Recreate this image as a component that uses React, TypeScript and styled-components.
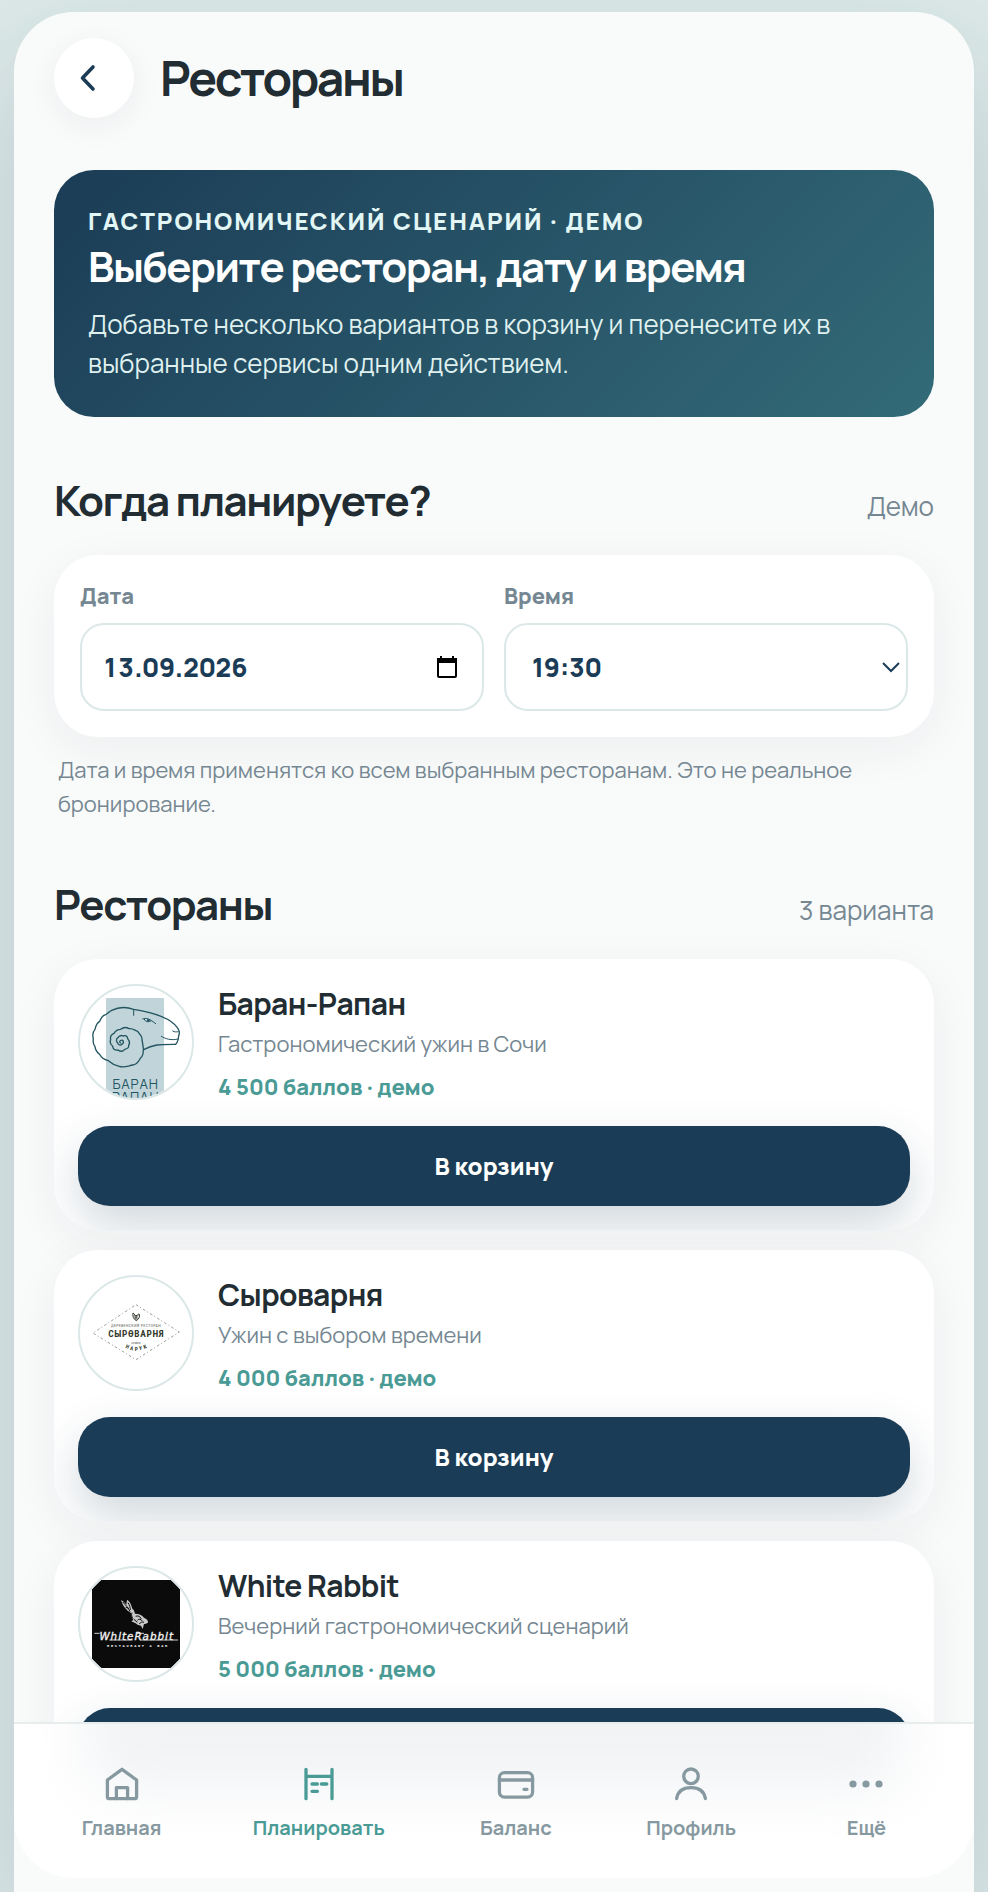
import React from 'react';
import styled, { createGlobalStyle, css } from 'styled-components';

const GlobalStyle = createGlobalStyle`
  *, *::before, *::after { box-sizing: border-box; }
  body {
    margin: 0;
    background: #dde9e8;
    color: #222d33;
    font-family: Manrope, Inter, "Noto Sans", sans-serif;
    -webkit-font-smoothing: antialiased;
  }
  h1, h2, h3, p { margin: 0; }
  button, input, select { font: inherit; }
`;

const Page = styled.div`
  display: flex;
  height: 100vh;
  padding: 12px 14px 0;
  overflow: hidden;
`;

const Frame = styled.div`
  flex: 1;
  min-width: 0;
  overflow-y: auto;
  scrollbar-width: none;
  background: #f9fbfa;
  border-radius: 60px 60px 0 0;
  box-shadow: 0 48px 120px rgba(27, 59, 87, 0.18);
`;

const Content = styled.main`
  display: flex;
  flex-direction: column;
  padding: 26px 40px 0;
`;

const TopBar = styled.header`
  display: flex;
  align-items: center;
  gap: 26px;
  margin-bottom: 52px;
`;

const BackButton = styled.button`
  display: grid;
  place-items: center;
  width: 80px;
  height: 80px;
  padding: 0 12px 0 0;
  border: 0;
  border-radius: 50%;
  background: #fff;
  color: #1b3c56;
  box-shadow: 0 8px 32px rgba(27, 39, 87, 0.06);
`;

const PageTitle = styled.h1`
  font-size: 48px;
  line-height: 56px;
  font-weight: 700;
  letter-spacing: -0.05em;
`;

const Hero = styled.section`
  padding: 34px;
  border-radius: 40px;
  background: linear-gradient(135deg, #1b3c56, #336b78);
  color: #fff;
`;

const Eyebrow = styled.p`
  font-size: 24px;
  line-height: 34px;
  font-weight: 800;
  letter-spacing: 0.08em;
  text-transform: uppercase;
  color: #e2f6f5;
`;

const headingText = css`
  font-size: 42px;
  font-weight: 700;
  letter-spacing: -0.035em;
`;

const HeroTitle = styled.h2`
  ${headingText}
  line-height: 56px;
  margin-bottom: 11px;
`;

const HeroText = styled.p`
  font-size: 26px;
  line-height: 39px;
  font-weight: 400;
  color: #dff0ef;
`;

const SectionHead = styled.div`
  display: flex;
  align-items: baseline;
  justify-content: space-between;
  margin: 56px 0 28px;
`;

const SectionTitle = styled.h2`
  ${headingText}
  line-height: 54px;
`;

const SectionNote = styled.span`
  font-size: 26px;
  line-height: 36px;
  font-weight: 400;
  color: #758792;
`;

const Card = styled.section`
  border-radius: 44px;
  background: #fff;
  box-shadow: 0 12px 48px rgba(27, 39, 87, 0.06);
`;

const PlanCard = styled(Card)`
  display: grid;
  grid-template-columns: 1fr 1fr;
  gap: 20px;
  padding: 26px;
`;

const Field = styled.div`
  display: flex;
  flex-direction: column;
  gap: 12px;
`;

const FieldLabel = styled.label`
  font-size: 22px;
  line-height: 30px;
  font-weight: 800;
  color: #758792;
`;

const controlBox = css`
  width: 100%;
  height: 88px;
  border: 2px solid #dce7e8;
  border-radius: 24px;
  background: #fff;
  color: #1b3c56;
  font-size: 26px;
  font-weight: 800;
`;

const ControlWrap = styled.div<{ $inset: number }>`
  position: relative;

  svg {
    position: absolute;
    top: 50%;
    right: ${(p) => p.$inset}px;
    transform: translateY(-50%);
    pointer-events: none;
  }
`;

const DateInput = styled.input`
  ${controlBox}
  padding: 0 20px;
  font-variant-numeric: tabular-nums;
`;

const TimeSelect = styled.select`
  ${controlBox}
  appearance: none;
  padding: 0 26px;
`;

const Hint = styled.p`
  margin-top: 16px;
  padding: 0 4px;
  font-size: 22px;
  line-height: 34px;
  font-weight: 400;
  color: #758792;
`;

const List = styled.div`
  display: flex;
  flex-direction: column;
  gap: 20px;
  padding-bottom: 80px;
`;

const RestaurantCard = styled(Card).attrs({ as: 'article' })`
  display: flex;
  flex-direction: column;
  gap: 24px;
  padding: 24px;
  overflow: hidden;
`;

const Info = styled.div`
  display: flex;
  align-items: flex-start;
  gap: 24px;
`;

const Avatar = styled.div`
  flex: none;
  width: 116px;
  height: 116px;
  margin-top: 1px;
  border: 2px solid #dce7e8;
  border-radius: 50%;
  overflow: hidden;
  background: #fff;

  svg { display: block; width: 100%; height: 100%; }
`;

const Name = styled.h3`
  font-size: 30px;
  line-height: 42px;
  font-weight: 700;
  letter-spacing: -0.02em;
`;

const Description = styled.p`
  font-size: 22px;
  line-height: 38px;
  font-weight: 400;
  color: #758792;
`;

const Price = styled.p`
  margin-top: 9px;
  font-size: 22px;
  line-height: 30px;
  font-weight: 800;
  color: #4a9b95;
`;

const AddButton = styled.button`
  height: 80px;
  padding: 0 0 2px;
  border: 0;
  border-radius: 32px;
  background: #1b3c56;
  color: #fff;
  font-size: 24px;
  font-weight: 800;
  box-shadow: 0 20px 48px rgba(27, 60, 86, 0.2);
`;

const TabBar = styled.nav`
  position: sticky;
  bottom: 14px;
  display: grid;
  grid-template-columns: 4fr 5fr 4fr 4fr 4fr;
  height: 156px;
  padding: 42px 20px 0;
  border-top: 2px solid #e7eded;
  border-radius: 0 0 60px 60px;
  background: #fff;
  overflow: hidden;

  &::before {
    content: "";
    position: absolute;
    inset: -80px 72px 88px;
    border-radius: 32px;
    background: #f1f3f5;
    filter: blur(28px);
  }
`;

const Tab = styled.a<{ $active?: boolean }>`
  position: relative;
  display: flex;
  flex-direction: column;
  align-items: center;
  gap: 12px;
  color: ${(p) => (p.$active ? '#4a9b95' : '#8799a0')};
  font-size: 20px;
  line-height: 28px;
  font-weight: 700;
  text-decoration: none;

  svg { overflow: visible; }
`;

const StrokeIcon = ({ children }: { children: React.ReactNode }) => (
  <svg width="36" height="36" viewBox="0 0 36 36" fill="none" stroke="currentColor" strokeWidth="3.3" strokeLinecap="round" strokeLinejoin="round" aria-hidden="true">
    {children}
  </svg>
);

const HomeIcon = () => (
  <StrokeIcon>
    <path d="M18 3.3 3.4 14v16.7a2 2 0 0 0 2 2h25.2a2 2 0 0 0 2-2V14Z" />
    <path d="M12.4 32.5V21.6h11.2v10.9" />
  </StrokeIcon>
);

const PlanIcon = () => (
  <StrokeIcon>
    <path d="M5 3.3v29.4M31 3.3v29.4M5 10.3h26M11 18h5.4M20.4 18h5.4M11 25.3h5.4" />
  </StrokeIcon>
);

const BalanceIcon = () => (
  <StrokeIcon>
    <rect x="1.4" y="6.7" width="33.2" height="24.4" rx="5" />
    <path d="M1.4 14h33.2M26 23.3h3" />
  </StrokeIcon>
);

const ProfileIcon = () => (
  <StrokeIcon>
    <circle cx="18" cy="10.3" r="7.3" />
    <path d="M3.6 32.6C4.8 25.4 9.8 21.6 18 21.6s13.2 3.8 14.4 11" />
  </StrokeIcon>
);

const MoreIcon = () => (
  <svg width="36" height="36" viewBox="0 0 36 36" fill="currentColor" aria-hidden="true">
    <circle cx="5" cy="18" r="3.6" />
    <circle cx="18" cy="18" r="3.6" />
    <circle cx="31" cy="18" r="3.6" />
  </svg>
);

const RamLogo = () => (
  <svg viewBox="60 51 336 336" role="img" aria-label="Баран Рапан">
    <rect x="138" y="87" width="174" height="320" fill="#c0d4d9" />
    <g fill="none" stroke="#235561" strokeWidth="4" strokeLinecap="round" strokeLinejoin="round">
      <path d="M251 242c30-17 50-16 96-16 8-8 8-15 9-26 5-10 1-17-4-24-20-30-75-46-131-55-25-9-48-6-66 3-8 4-11 10-18 13-11 3-14 10-18 20-10 6-12 14-14 24-8 9-8 17-5 27-2 11 0 18 5 25 1 13 8 18 15 24 5 12 15 15 25 18 10 9 20 14 33 17 15 5 28-2 40-4 13-1 18-11 23-20 9-7 9-15 9-26Z" />
      <path d="M251 242c-3-10-2-18-5-29 2-15-9-17-13-26-9-3-15-10-26-8-11-7-19-3-25 2-11 0-16 5-20 12-9 4-12 11-10 19-4 9-1 14 6 20 2 11 9 12 16 11 9 7 16 3 20-2 9-1 13-6 12-13 6-8 2-13-3-19-1-9-7-10-13-8-8-4-13 0-16 5-7 4-5 12-1 16 3 8 11 8 15 2 5-5 1-12-5-10-5 1-5 6-1 8" />
      <path d="M221 122v17M304 202c13 8 30 13 50 8M338 186c6 4 12 3 17 2" strokeWidth="3" />
      <path d="M248 150c12-5 21 0 39 14M253 151c2 8 13 9 20 5" strokeWidth="3" />
    </g>
    <circle cx="265" cy="154" r="4" fill="#235561" />
    <g fill="#235561" fontFamily="Manrope, Inter, sans-serif" fontWeight="400" fontSize="40" letterSpacing="3" textAnchor="middle">
      <text x="227" y="361">БАРАН</text>
      <text x="227" y="400">РАПАН</text>
    </g>
  </svg>
);

const CheeseLogo = () => (
  <svg viewBox="60 51 336 336" role="img" aria-label="Сыроварня">
    <path d="M228 134 358 216 228 299 99 219Z" fill="none" stroke="#8a8c88" strokeWidth="2.6" strokeDasharray="8 7 3 7" />
    <path d="M219 159c7 4 4 8 9 8s5-7 10-4c2 7-1 14-9 19-8-4-12-13-10-23Z" fill="none" stroke="#333a2b" strokeWidth="3" />
    <path d="M221 165l6 7 9-7M228 168v12M222 174h12" fill="none" stroke="#333a2b" strokeWidth="2.4" />
    <g fill="#343a2b" textAnchor="middle" fontFamily='"Liberation Sans Narrow", "Roboto Condensed", "DejaVu Sans Condensed", sans-serif'>
      <text x="228" y="201" fontSize="12" letterSpacing="1" fill="#666a61">ДЕРЕВЕНСКИЙ РЕСТОРАН</text>
      <text x="229" y="231" fontSize="28" fontWeight="700" letterSpacing="2">СЫРӨВАРНЯ</text>
      <text x="228" y="251" fontSize="11" fill="#666a61">семьи</text>
      <g fontSize="16" fontWeight="700">
        <text x="200" y="265" transform="rotate(22 200 265)">Н</text>
        <text x="214" y="270" transform="rotate(12 214 270)">А</text>
        <text x="229" y="272">Р</text>
        <text x="243" y="270" transform="rotate(-12 243 270)">У</text>
        <text x="257" y="265" transform="rotate(-22 257 265)">К</text>
      </g>
    </g>
  </svg>
);

const RabbitLogo = () => (
  <svg viewBox="60 54 336 336" role="img" aria-label="White Rabbit">
    <path d="M123 90h210l27 27v209l-27 28H123l-27-28V117Z" fill="#0b0b0b" />
    <path d="M183 150c9 5 14 12 17 14-1-7 0-12 2-15 8 6 12 15 15 27 6 4 6 9 8 15 12 0 21 4 27 12 8 3 13 8 12 15-5 2-8 4-12 4l-4 15-5-10c-8-1-13-4-16-7l-13-6 6-4c-4-7-8-13-7-21-14-8-25-21-30-39Z" fill="#c9c9c9" />
    <path d="M188 156c8 9 18 17 22 29M204 158c5 7 7 16 7 22M216 188c-3 7-1 14 4 17M227 199c6-3 14 0 17 8M232 211c4-5 11-4 15 2M238 222c4-6 9-7 14-5M222 208l10 9M197 172l9 3" fill="none" stroke="#0b0b0b" strokeWidth="3" />
    <g fill="#f2f2f2" textAnchor="middle">
      <text x="230" y="271" fontSize="31" fontStyle="italic" stroke="#f2f2f2" strokeWidth="1" letterSpacing="3" fontFamily='"DejaVu Sans", sans-serif'>WhiteRabbit</text>
      <text x="234" y="291" fontSize="11" fontWeight="700" fontFamily='"Liberation Mono", monospace' letterSpacing="5">RESTAURANT &amp; BAR</text>
    </g>
    <path d="M148 270h70M240 270h114M103 250h16M230 250h22" stroke="#f2f2f2" strokeWidth="2.5" />
  </svg>
);

const restaurants = [
  { name: 'Баран-Рапан', text: 'Гастрономический ужин в Сочи', price: '4 500 баллов · демо', Logo: RamLogo },
  { name: 'Сыроварня', text: 'Ужин с выбором времени', price: '4 000 баллов · демо', Logo: CheeseLogo },
  { name: 'White Rabbit', text: 'Вечерний гастрономический сценарий', price: '5 000 баллов · демо', Logo: RabbitLogo },
];

const tabs = [
  { label: 'Главная', Icon: HomeIcon },
  { label: 'Планировать', Icon: PlanIcon, active: true },
  { label: 'Баланс', Icon: BalanceIcon },
  { label: 'Профиль', Icon: ProfileIcon },
  { label: 'Ещё', Icon: MoreIcon },
];

export default function App() {
  return (
    <>
      <GlobalStyle />
      <Page>
        <Frame>
          <Content>
            <TopBar>
              <BackButton type="button" aria-label="Назад">
                <svg width="16" height="28" viewBox="0 0 16 28" fill="none" stroke="currentColor" strokeWidth="3.6" strokeLinecap="round" strokeLinejoin="round" aria-hidden="true">
                  <path d="M13 3 2.5 14 13 25" />
                </svg>
              </BackButton>
              <PageTitle>Рестораны</PageTitle>
            </TopBar>

            <Hero>
              <Eyebrow>Гастрономический сценарий · демо</Eyebrow>
              <HeroTitle>Выберите ресторан, дату и время</HeroTitle>
              <HeroText>
                Добавьте несколько вариантов в корзину и перенесите их в выбранные сервисы одним действием.
              </HeroText>
            </Hero>

            <SectionHead>
              <SectionTitle>Когда планируете?</SectionTitle>
              <SectionNote>Демо</SectionNote>
            </SectionHead>
            <PlanCard>
              <Field>
                <FieldLabel htmlFor="plan-date">Дата</FieldLabel>
                <ControlWrap $inset={26}>
                  <DateInput id="plan-date" type="text" inputMode="numeric" defaultValue="13.09.2026" />
                  <svg width="22" height="24" viewBox="0 0 22 24" fill="none" stroke="#000" strokeWidth="2" aria-hidden="true">
                    <path d="M2 4h18v17a1 1 0 0 1-1 1H3a1 1 0 0 1-1-1Z" />
                    <path d="M1 5.5h20" strokeWidth="5" />
                    <path d="M5 1v4M17 1v4" />
                  </svg>
                </ControlWrap>
              </Field>
              <Field>
                <FieldLabel htmlFor="plan-time">Время</FieldLabel>
                <ControlWrap $inset={8}>
                  <TimeSelect id="plan-time" defaultValue="19:30">
                    <option>18:00</option>
                    <option>19:30</option>
                    <option>21:00</option>
                  </TimeSelect>
                  <svg width="18" height="12" viewBox="0 0 18 12" fill="none" stroke="#1b3c56" strokeWidth="2" aria-hidden="true">
                    <path d="M1 2l8 8 8-8" />
                  </svg>
                </ControlWrap>
              </Field>
            </PlanCard>
            <Hint>Дата и время применятся ко всем выбранным ресторанам. Это не реальное бронирование.</Hint>

            <SectionHead>
              <SectionTitle>Рестораны</SectionTitle>
              <SectionNote>3 варианта</SectionNote>
            </SectionHead>
            <List>
              {restaurants.map(({ name, text, price, Logo }) => (
                <RestaurantCard key={name}>
                  <Info>
                    <Avatar><Logo /></Avatar>
                    <div>
                      <Name>{name}</Name>
                      <Description>{text}</Description>
                      <Price>{price}</Price>
                    </div>
                  </Info>
                  <AddButton type="button">В корзину</AddButton>
                </RestaurantCard>
              ))}
            </List>
          </Content>
          <TabBar>
            {tabs.map(({ label, Icon, active }) => (
              <Tab key={label} href="#" $active={active} aria-current={active ? 'page' : undefined}>
                <Icon />
                {label}
              </Tab>
            ))}
          </TabBar>
        </Frame>
      </Page>
    </>
  );
}
